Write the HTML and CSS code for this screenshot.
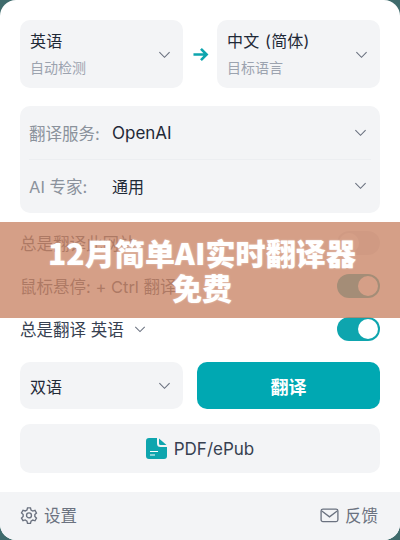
FILE: index.html
```html
<!DOCTYPE html>
<html lang="zh-CN">
<head>
    <meta charset="UTF-8">
    <meta name="viewport" content="width=device-width, initial-scale=1.0">
    <title>12月简单AI实时翻译器免费</title>
    <link rel="stylesheet" href="styles.css">
</head>
<body>
    <div class="panel">
        <div class="content">
            <div class="lang-row">
                <div class="box lang-box">
                    <div>
                        <div class="lang-name">英语</div>
                        <div class="lang-sub">自动检测</div>
                    </div>
                    <svg class="chev" viewBox="0 0 14 14"><path d="M1.5 4.5 7 10l5.5-5.5"/></svg>
                </div>
                <svg class="arrow" viewBox="0 0 18 16"><path d="M1.5 8h14M9.5 2l6 6-6 6"/></svg>
                <div class="box lang-box">
                    <div>
                        <div class="lang-name">中文 (简体)</div>
                        <div class="lang-sub">目标语言</div>
                    </div>
                    <svg class="chev" viewBox="0 0 14 14"><path d="M1.5 4.5 7 10l5.5-5.5"/></svg>
                </div>
            </div>

            <div class="box service-box">
                <div class="service-row">
                    <span class="service-label">翻译服务:</span>
                    <span class="service-value">OpenAI</span>
                    <svg class="chev" viewBox="0 0 14 14"><path d="M1.5 4.5 7 10l5.5-5.5"/></svg>
                </div>
                <div class="service-row">
                    <span class="service-label">AI 专家:</span>
                    <span class="service-value expert">通用</span>
                    <svg class="chev" viewBox="0 0 14 14"><path d="M1.5 4.5 7 10l5.500-5.500"/></svg>
                </div>
            </div>

            <div class="toggles">
                <div class="toggle-row">
                    <span>总是翻译此网站</span>
                    <span class="switch off"></span>
                </div>
                <div class="toggle-row">
                    <span>鼠标悬停: + Ctrl 翻译</span>
                    <span class="switch"></span>
                </div>
                <div class="toggle-row">
                    <span class="always">总是翻译 英语
                        <svg class="chev small" viewBox="0 0 14 14"><path d="M1.5 4.5 7 10l5.5-5.5"/></svg>
                    </span>
                    <span class="switch"></span>
                </div>
            </div>

            <div class="action-row">
                <div class="box mode-box">
                    <span>双语</span>
                    <svg class="chev" viewBox="0 0 14 14"><path d="M1.5 4.5 7 10l5.5-5.5"/></svg>
                </div>
                <div class="translate-btn">翻译</div>
            </div>

            <div class="box pdf-box">
                <svg class="pdf-icon" viewBox="0 0 21 21">
                    <path class="pdf-page" d="M3 0h8v5.5A3.500 3.500 0 0 0 14.500 9H21v9a3 3 0 0 1-3 3H3a3 3 0 0 1-3-3V3a3 3 0 0 1 3-3z"/>
                    <path class="pdf-page" d="M13 .5 20.500 7h-6A1.500 1.500 0 0 1 13 5.500z"/>
                    <path class="pdf-lines" d="M4 13.500h8M4 17h5"/>
                </svg>
                <span>PDF/ePub</span>
            </div>
        </div>

        <div class="footer">
            <div class="footer-item">
                <svg class="footer-icon" viewBox="0 0 24 24"><path d="M10 2.500h4l.7 3 2.300 1.300 3-.9 2 3.500-2.200 2.100v2.600l2.200 2.100-2 3.500-3-.9-2.300 1.300-.7 3h-4l-.7-3L7 18.600l-3 .9-2-3.500 2.200-2.100v-2.600L2 9.200l2-3.500 3 .9 2.300-1.300z"/><circle cx="12" cy="12.500" r="3.300"/></svg>
                <span>设置</span>
            </div>
            <div class="footer-item">
                <svg class="footer-icon mail" viewBox="0 0 26 24"><rect x="1.500" y="4" width="23" height="17" rx="2.500"/><path d="m2.500 6.500 10.500 8 10.500-8"/></svg>
                <span>反馈</span>
            </div>
        </div>
    </div>

    <div class="banner">
        <div class="banner-title">12月简单AI实时翻译器<br>免费</div>
    </div>
</body>
</html>
```

FILE: styles.css
```css
html, body {
    margin: 0;
    padding: 0;
}
body {
    width: 400px;
    height: 540px;
    overflow: hidden;
    position: relative;
    background-color: #3f6b6c;
    font-family: Inter, "Noto Sans CJK SC", sans-serif;
    color: #1f2937;
}
.panel {
    height: 540px;
    background-color: #fff;
    border-radius: 16px;
    overflow: hidden;
    display: flex;
    flex-direction: column;
    justify-content: space-between;
}
.content {
    padding: 20px 20px 0;
}
.box {
    background-color: #f3f4f6;
    border-radius: 10px;
}
.chev {
    width: 13px;
    height: 13px;
    flex: none;
    fill: none;
    stroke: #6b7280;
    stroke-width: 1.2;
}
.chev.small {
    width: 12px;
    height: 12px;
    margin-left: 10px;
}
.lang-row {
    display: flex;
    align-items: center;
    justify-content: space-between;
}
.lang-box {
    width: 163px;
    height: 68px;
    box-sizing: border-box;
    padding: 0 12px 0 10px;
    display: flex;
    align-items: center;
    justify-content: space-between;
}
.lang-name {
    font-size: 16px;
    line-height: 22px;
    word-spacing: 1px;
    letter-spacing: 0.2px;
}
.lang-sub {
    font-size: 14px;
    line-height: 20px;
    margin-top: 6px;
    color: #9ca3af;
}
.arrow {
    width: 17px;
    height: 15px;
    fill: none;
    stroke: #0ea5ae;
    stroke-width: 2.8;
}
.service-box {
    margin-top: 18px;
    padding: 0 9px;
}
.service-row {
    height: 53px;
    display: flex;
    align-items: center;
    padding-right: 4px;
}
.service-row + .service-row {
    border-top: 1px solid #eceef1;
    margin-top: 0;
    padding-bottom: 2px;
    height: 51px;
}
.service-label {
    width: 83px;
    font-size: 16.5px;
    color: #8b929c;
}
.service-value {
    flex: 1;
    font-size: 17px;
    color: #1f2937;
}
.service-value.expert {
    font-size: 16px;
}
.toggles {
    margin-top: 8px;
}
.toggle-row {
    height: 43px;
    display: flex;
    align-items: center;
    justify-content: space-between;
    font-size: 16.5px;
    color: #374151;
}
.always {
    display: flex;
    align-items: center;
}
.switch {
    width: 43px;
    height: 24px;
    box-sizing: border-box;
    padding: 2px;
    border-radius: 12px;
    background-color: #0ea5ae;
    display: flex;
    justify-content: flex-end;
}
.switch::after {
    content: "";
    width: 20px;
    height: 20px;
    border-radius: 50%;
    background-color: #fff;
}
.switch.off {
    background-color: #e5e7eb;
    justify-content: flex-start;
}
.action-row {
    margin-top: 12px;
    display: flex;
    justify-content: space-between;
}
.mode-box {
    width: 163px;
    height: 47px;
    box-sizing: border-box;
    padding: 0 12px 0 10px;
    display: flex;
    align-items: center;
    justify-content: space-between;
    font-size: 16px;
}
.translate-btn {
    width: 183px;
    height: 47px;
    border-radius: 10px;
    background-color: #00a8b2;
    color: #fff;
    font-size: 18px;
    font-weight: 700;
    display: flex;
    align-items: center;
    justify-content: center;
}
.pdf-box {
    margin-top: 15px;
    height: 49px;
    display: flex;
    align-items: center;
    justify-content: center;
    gap: 7px;
    font-size: 17px;
    color: #374151;
}
.pdf-icon {
    width: 21px;
    height: 21px;
}
.pdf-page {
    fill: #0ea5ae;
}
.pdf-lines {
    fill: none;
    stroke: #fff;
    stroke-width: 1.2;
}
.footer {
    height: 48px;
    box-sizing: border-box;
    padding: 0 22px 2px 20px;
    background-color: #f3f4f6;
    display: flex;
    align-items: center;
    justify-content: space-between;
    font-size: 16.5px;
    color: #6b7280;
}
.footer-item {
    display: flex;
    align-items: center;
    gap: 6px;
}
.footer-icon {
    width: 18px;
    height: 18px;
    fill: none;
    stroke: #6b7280;
    stroke-width: 1.8;
}
.footer-icon.mail {
    width: 19px;
}
/* overlay title strip */
.banner {
    position: absolute;
    left: 0;
    top: 222px;
    width: 400px;
    height: 96px;
    background-color: rgba(203, 135, 105, 0.8);
    display: flex;
    align-items: center;
    justify-content: center;
}
.banner-title {
    font-family: "Noto Sans CJK SC", sans-serif;
    font-size: 30px;
    line-height: 35px;
    font-weight: 900;
    color: #fff;
    text-align: center;
    padding-left: 4px;
    letter-spacing: 0.1px;
    text-shadow: 0 0 2px rgba(255, 255, 255, 0.5);
}
```
